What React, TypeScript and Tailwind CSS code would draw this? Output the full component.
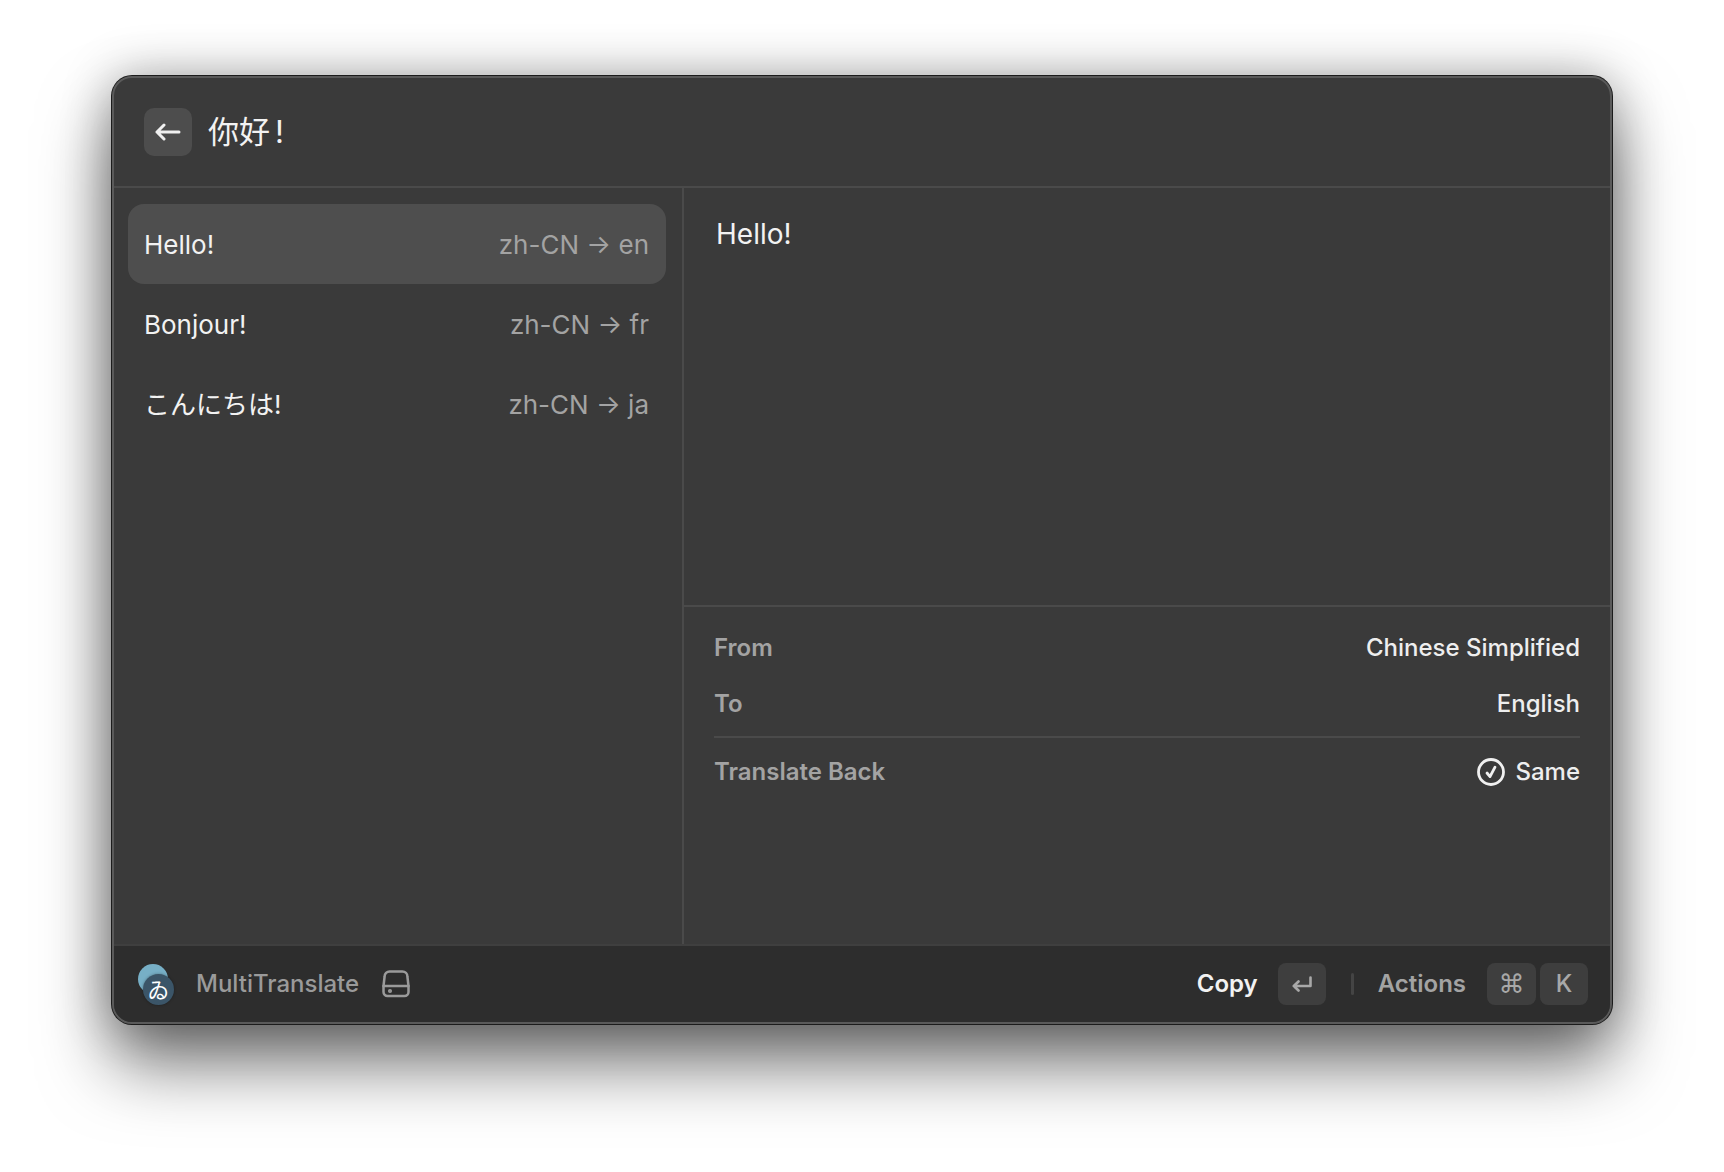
const RESULTS = [
  { text: 'Hello!', route: 'zh-CN → en', selected: true },
  { text: 'Bonjour!', route: 'zh-CN → fr', selected: false },
  { text: 'こんにちは!', route: 'zh-CN → ja', selected: false },
];

const FONT = "font-['Inter','Noto_Sans_CJK_SC','Noto_Sans_CJK_JP',sans-serif]";

function BackArrow() {
  return (
    <svg width="26" height="18" viewBox="0 0 26 18" fill="none" stroke="#f0f0f0" strokeWidth="3" strokeLinecap="round" strokeLinejoin="round">
      <path d="M24 9H2M9 2 2 9l7 7" />
    </svg>
  );
}

function DriveIcon() {
  return (
    <svg width="28" height="28" viewBox="0 0 28 28" fill="none" stroke="#9a9a9a" strokeWidth="2.5" strokeLinecap="round" strokeLinejoin="round">
      <path d="M1.5 16 2.6 6.5A5 5 0 0 1 7.6 1.5h12.8a5 5 0 0 1 5 5L26.5 16v6a4 4 0 0 1-4 4h-17a4 4 0 0 1-4-4z" />
      <path d="M1.5 16h25" />
      <circle cx="8" cy="21" r="0.8" fill="#9a9a9a" />
    </svg>
  );
}

function CheckIcon() {
  return (
    <svg width="28" height="28" viewBox="0 0 28 28" fill="none" stroke="#f0f0f0" strokeWidth="2.8" strokeLinecap="round" strokeLinejoin="round">
      <circle cx="14" cy="14" r="12.5" />
      <path d="m10 15 3 3.6 5-9.4" />
    </svg>
  );
}

function EnterIcon() {
  return (
    <svg width="20" height="16" viewBox="0 0 20 16" fill="none" stroke="#a8a8a8" strokeWidth="2.6" strokeLinecap="round" strokeLinejoin="round">
      <path d="M18.5 1.5V10H1.8M6.5 5.5 1.8 10l4.7 4.5" />
    </svg>
  );
}

function Logo() {
  return (
    <div className="relative h-[40px] w-[37px]">
      <div className="h-[30px] w-[30px] rounded-full bg-[#77afc6]" />
      <div className="absolute left-[5px] top-[10px] flex h-[31px] w-[31px] items-center justify-center rounded-full bg-[#3b5568] text-[22px] leading-none text-white shadow-[0_0_3px_rgba(0,0,0,0.35)]">
        ゐ
      </div>
    </div>
  );
}

function Key({ children, wide }: { children: React.ReactNode; wide?: boolean }) {
  return (
    <div className={`flex h-[42px] items-center justify-center rounded-[8px] bg-[#3e3e3e] text-[24px] font-medium text-[#a8a8a8] ${wide ? 'w-[49px]' : 'w-[48px]'}`}>
      {children}
    </div>
  );
}

function MetaRow({ label, children }: { label: string; children: React.ReactNode }) {
  return (
    <div className="flex h-[56px] items-center justify-between text-[24px] font-medium">
      <span className="font-semibold text-[#a3a3a3]">{label}</span>
      <span className="flex items-center gap-[10px] text-[#eeeeee]">{children}</span>
    </div>
  );
}

export default function App() {
  return (
    <div className={`min-h-[1172px] bg-white px-[112px] pt-[76px] ${FONT}`}>
      <div className="flex h-[948px] flex-col overflow-hidden rounded-[20px] border-2 border-[#5a5a5a] bg-[#3a3a3a] shadow-[0_0_0_1px_#1c1c1c,0_40px_70px_rgba(0,0,0,0.55),0_0_50px_rgba(0,0,0,0.3)]">
        <header className="flex h-[110px] shrink-0 items-center gap-[16px] border-b-2 border-[#4a4a4a] px-[30px]">
          <button className="flex h-[48px] w-[48px] items-center justify-center rounded-[10px] bg-[#4d4d4d]">
            <BackArrow />
          </button>
          <h1 className="mb-[2px] flex text-[31px] leading-none text-[#f2f2f2]">
            你好<span className="ml-[5px]">!</span>
          </h1>
        </header>

        <div className="flex min-h-0 flex-1">
          <div className="flex w-[570px] shrink-0 flex-col border-r-2 border-[#4a4a4a] py-[16px] pl-[14px] pr-[16px]">
            {RESULTS.map(item => (
              <div
                key={item.text}
                className={`flex h-[80px] items-center justify-between rounded-[16px] pl-[16px] pr-[17px] text-[26px] ${item.selected ? 'bg-[#4e4e4e]' : ''}`}
              >
                <span className="text-[#f2f2f2]">{item.text}</span>
                <span className="text-[#a3a3a3]">{item.route}</span>
              </div>
            ))}
          </div>

          <div className="flex min-w-0 flex-1 flex-col">
            <div className="h-[419px] shrink-0 border-b-2 border-[#4a4a4a] px-[32px] pt-[28px] text-[28px] leading-[36px] text-[#f2f2f2]">
              Hello!
            </div>
            <div className="px-[30px] pt-[13px]">
              <MetaRow label="From">Chinese Simplified</MetaRow>
              <MetaRow label="To">English</MetaRow>
              <div className="mt-[4px] h-[2px] bg-[#4a4a4a]" />
              <div className="mt-[6px]">
                <MetaRow label="Translate Back">
                  <CheckIcon />
                  Same
                </MetaRow>
              </div>
            </div>
          </div>
        </div>

        <footer className="flex h-[78px] shrink-0 items-center justify-between border-t-2 border-[#3f3f3f] bg-[#2d2d2d] pl-[24px] pr-[22px] text-[24px]">
          <div className="flex items-center">
            <Logo />
            <span className="ml-[21px] font-medium text-[#9a9a9a]">MultiTranslate</span>
            <span className="ml-[23px]">
              <DriveIcon />
            </span>
          </div>
          <div className="flex items-center">
            <span className="font-semibold text-[#f2f2f2]">Copy</span>
            <div className="ml-[20px]">
              <Key>
                <EnterIcon />
              </Key>
            </div>
            <div className="ml-[25px] h-[22px] w-[3px] rounded-full bg-[#444444]" />
            <span className="ml-[24px] font-semibold text-[#a3a3a3]">Actions</span>
            <div className="ml-[21px] flex gap-[4px]">
              <Key wide>
                <span className="font-['DejaVu_Sans',sans-serif] text-[26px]">⌘</span>
              </Key>
              <Key>K</Key>
            </div>
          </div>
        </footer>
      </div>
    </div>
  );
}
